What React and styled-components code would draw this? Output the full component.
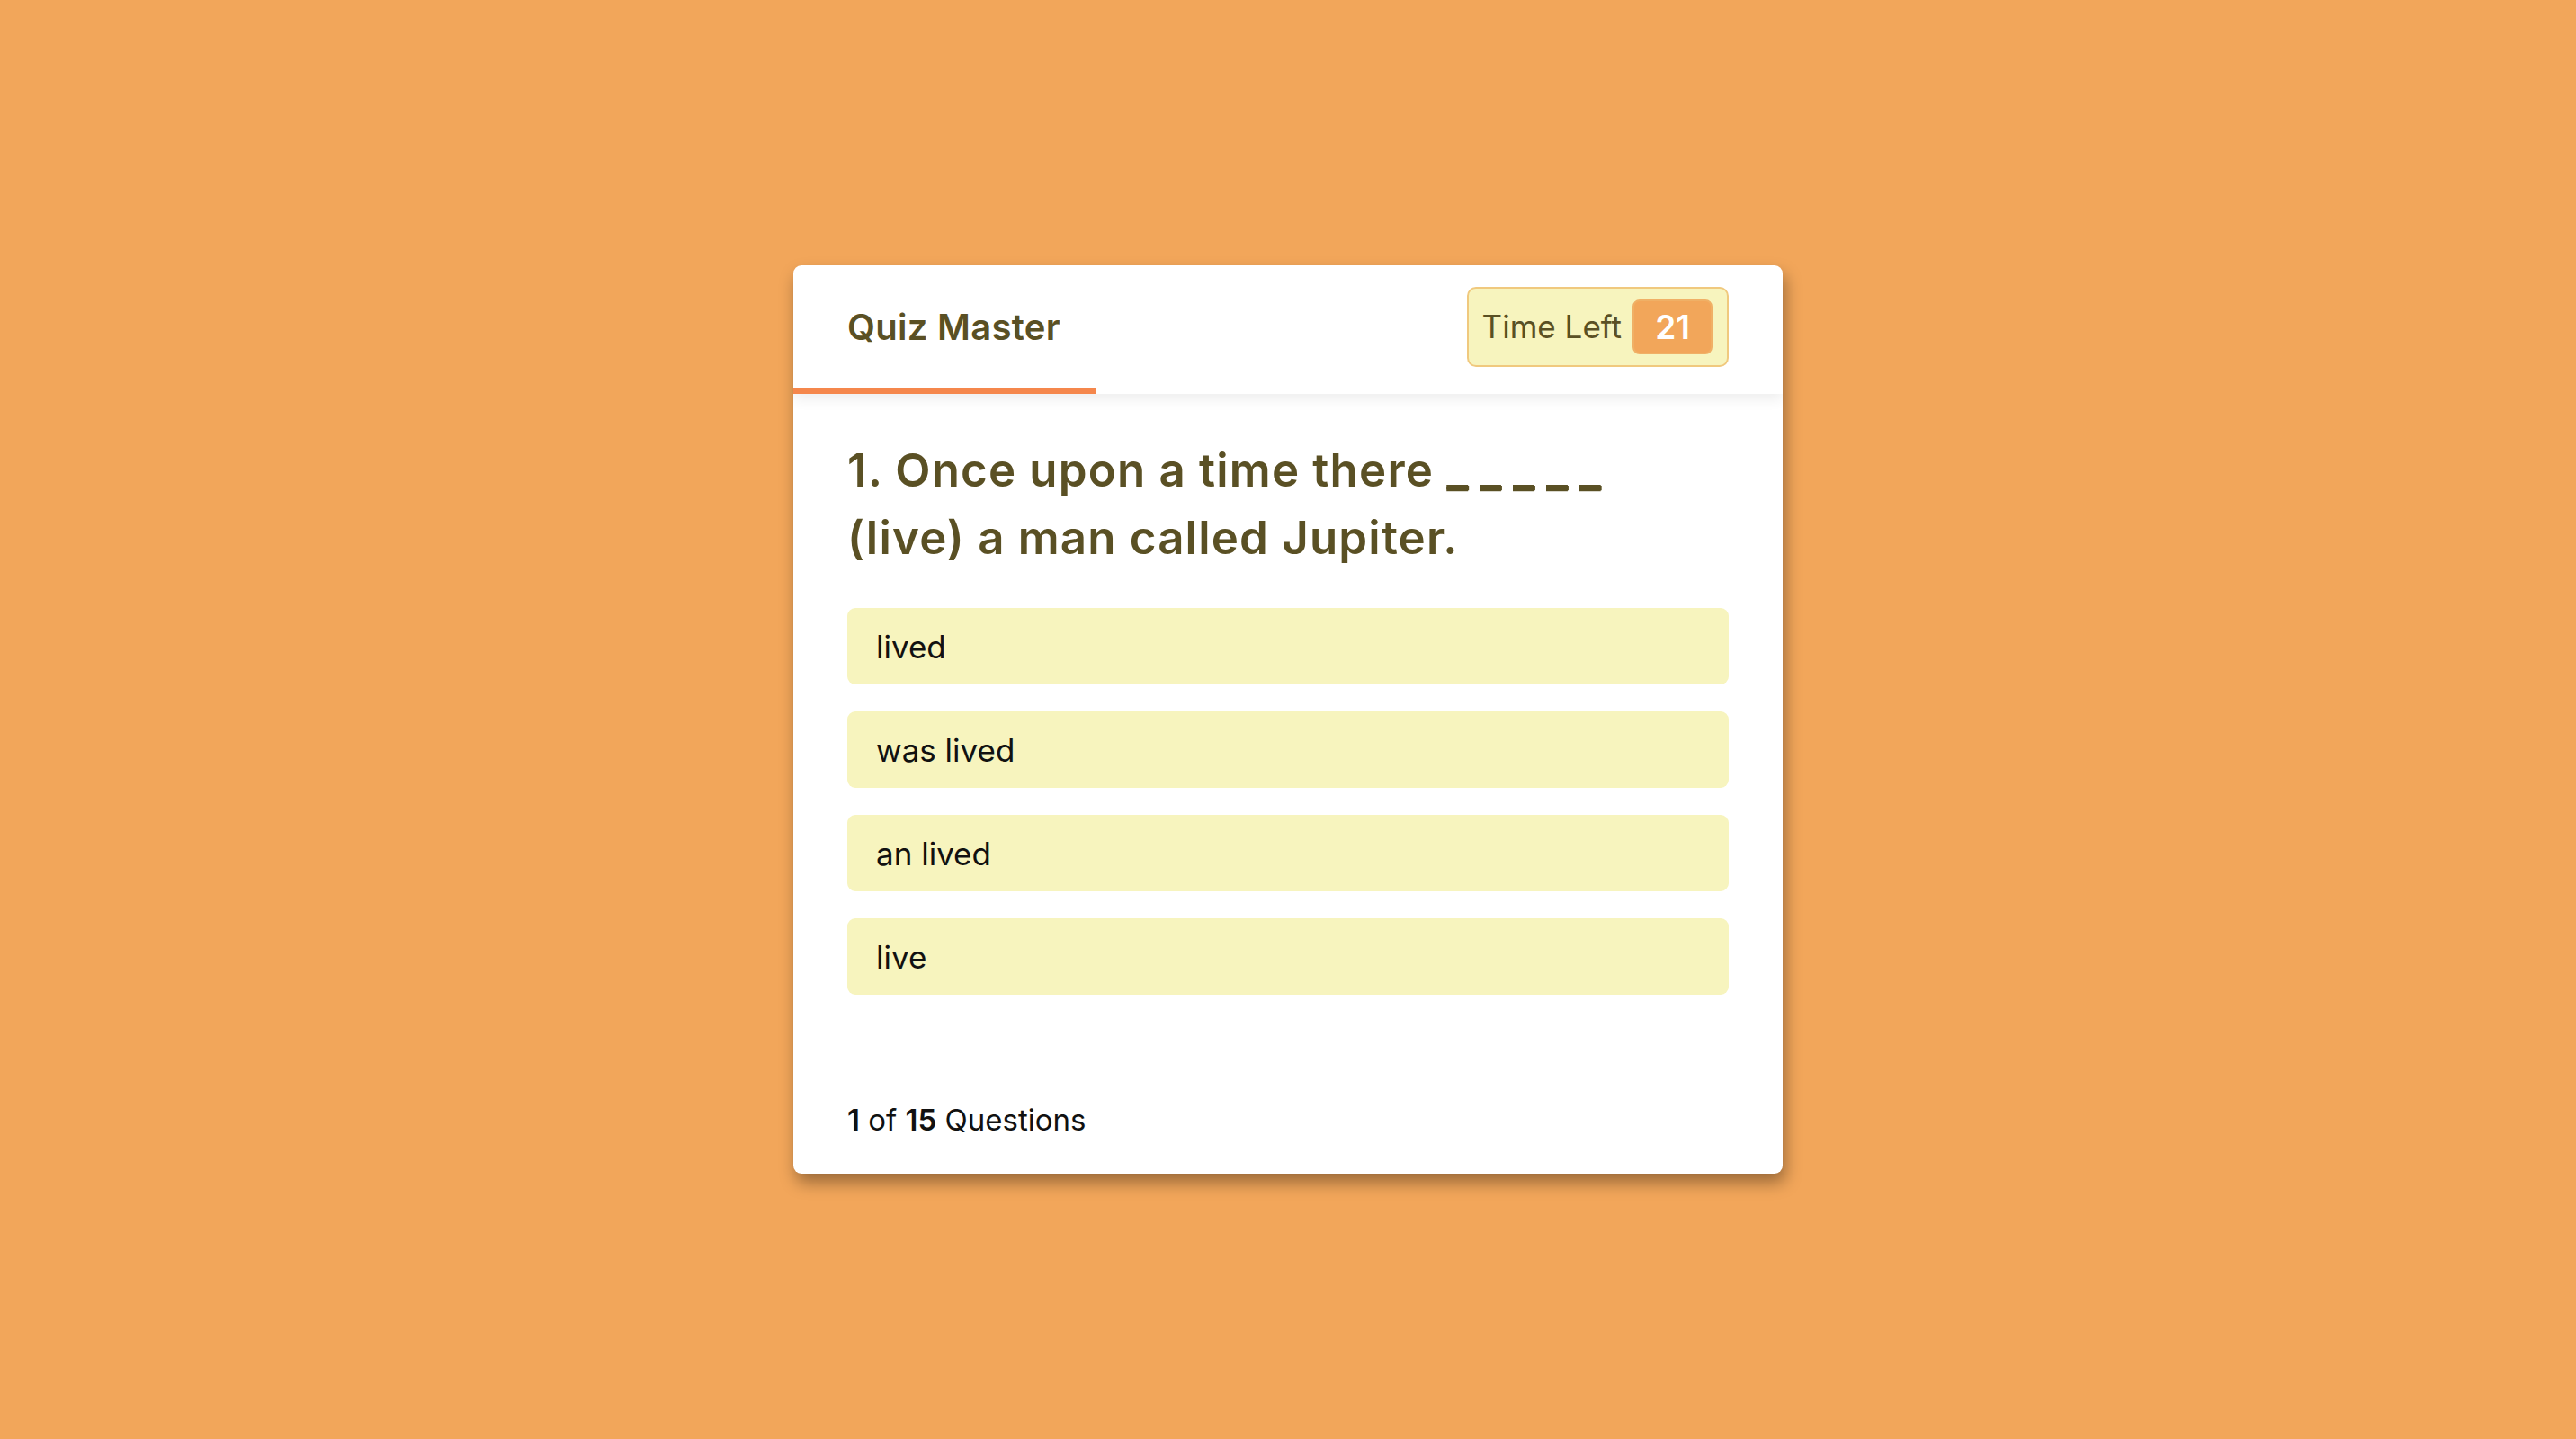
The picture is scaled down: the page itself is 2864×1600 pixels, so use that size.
import React, { useState } from "react";
import styled, { createGlobalStyle } from "styled-components";

const GlobalStyle = createGlobalStyle`
  html, body {
    margin: 0;
    padding: 0;
  }
  body {
    background: #f2a65a;
    font-family: Inter, "Noto Sans", sans-serif;
  }
`;

const Page = styled.div`
  min-height: 100vh;
  display: flex;
  justify-content: center;
  align-items: center;
`;

const Card = styled.div`
  width: 1100px;
  background: #ffffff;
  border-radius: 9px;
  overflow: hidden;
  box-shadow: 3px 10px 18px rgba(0, 0, 0, 0.36);
`;

const Header = styled.header`
  height: 143px;
  display: flex;
  flex-direction: column;
  box-shadow: 0 6px 14px rgba(0, 0, 0, 0.07);
  position: relative;
  z-index: 1;
`;

const HeaderRow = styled.div`
  flex: 1;
  display: flex;
  align-items: center;
  justify-content: space-between;
  padding: 0 60px;
`;

const Title = styled.h1`
  margin: 0;
  font-size: 40px;
  font-weight: 600;
  color: #5a5024;
  letter-spacing: 0.3px;
`;

const TimerBox = styled.div`
  display: flex;
  align-items: center;
  gap: 12px;
  height: 89px;
  box-sizing: border-box;
  padding: 0 16px 0 15px;
  background: #f7f4be;
  border: 2px solid #f0c97e;
  border-radius: 10px;
`;

const TimerLabel = styled.span`
  font-size: 35px;
  font-weight: 400;
  color: #5a5024;
`;

const TimerCount = styled.span`
  display: flex;
  align-items: center;
  justify-content: center;
  width: 89px;
  height: 61px;
  box-sizing: border-box;
  background: #f2a65a;
  border: 2px solid #f0b066;
  border-radius: 8px;
  color: #ffffff;
  font-size: 37px;
  font-weight: 600;
`;

const TimeBar = styled.div`
  height: 7px;
  background: #f5874c;
`;

const Body = styled.section`
  padding: 47px 60px 40px;
`;

const Question = styled.h2`
  margin: 0 0 41px;
  font-size: 51px;
  line-height: 75px;
  font-weight: 600;
  letter-spacing: 1.2px;
  color: #5a5024;
`;

const Blank = styled.span`
  letter-spacing: 13px;
  text-shadow: 0 -2px 0 currentColor, 1px -1px 0 currentColor;
`;

const Options = styled.ul`
  list-style: none;
  margin: 0;
  padding: 0;
  display: flex;
  flex-direction: column;
  gap: 30px;
`;

const Option = styled.li`
  height: 85px;
  display: flex;
  align-items: center;
  padding: 0 32px;
  border-radius: 9px;
  background: ${(p) => (p.selected ? "#f1e98e" : "#f7f4be")};
  color: #111111;
  font-size: 35px;
  cursor: pointer;
`;

const Footer = styled.footer`
  margin-top: 119px;
  font-size: 33px;
  color: #111111;
  b {
    font-weight: 600;
  }
`;

const options = ["lived", "was lived", "an lived", "live"];

export default function App() {
  const [selected, setSelected] = useState(null);
  const timeLeft = 21;
  const total = 30;

  return (
    <>
      <GlobalStyle />
      <Page>
        <Card>
          <Header>
            <HeaderRow>
              <Title>Quiz Master</Title>
              <TimerBox>
                <TimerLabel>Time Left</TimerLabel>
                <TimerCount>{timeLeft}</TimerCount>
              </TimerBox>
            </HeaderRow>
            <TimeBar style={{ width: `${((total - timeLeft) / total) * 100 + 0.55}%` }} />
          </Header>
          <Body>
            <Question>
              1. Once upon a time there <Blank>_____</Blank>
              <br />
              (live) a man called Jupiter.
            </Question>
            <Options>
              {options.map((opt, i) => (
                <Option key={opt} selected={selected === i} onClick={() => setSelected(i)}>
                  {opt}
                </Option>
              ))}
            </Options>
            <Footer>
              <b>1</b> of <b>15</b> Questions
            </Footer>
          </Body>
        </Card>
      </Page>
    </>
  );
}
